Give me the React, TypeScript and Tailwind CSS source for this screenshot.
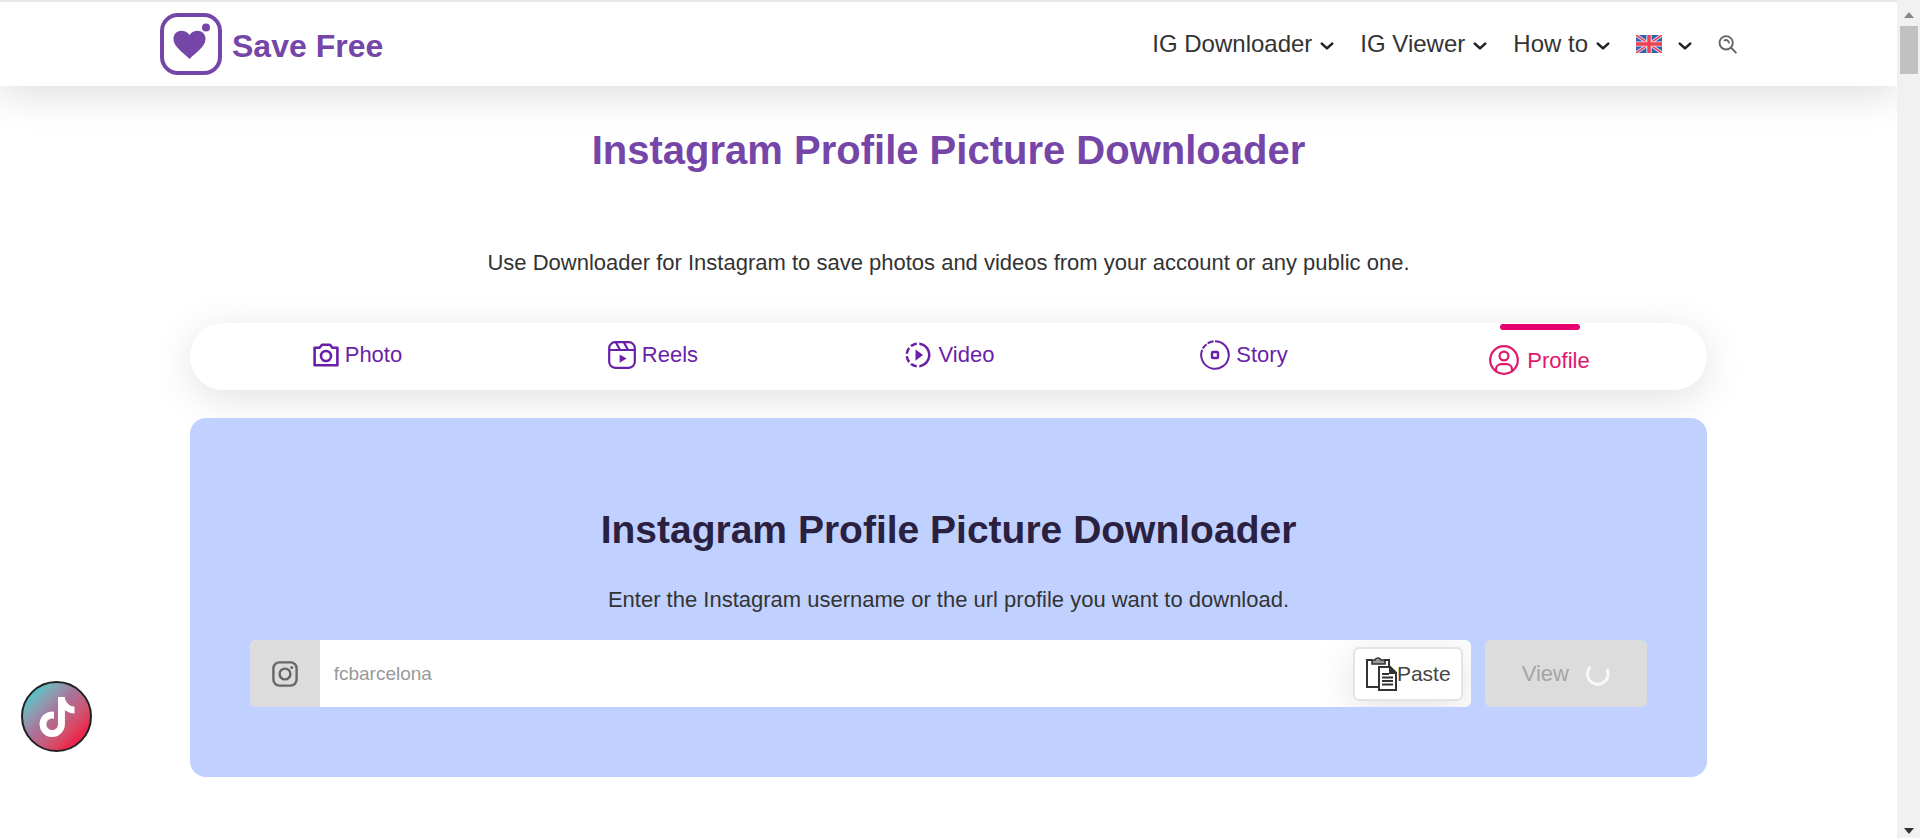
import type { ReactNode } from "react";
import { FaTiktok } from "react-icons/fa";
import { MdOutlineSlowMotionVideo } from "react-icons/md";

const Caret = () => (
  <svg viewBox="0 0 14 8" className="w-3.5 h-2 mt-1" fill="none" stroke="#222" strokeWidth="2.6" strokeLinecap="round" strokeLinejoin="round">
    <path d="M1.8 1.6 7 6.4l5.2-4.8" />
  </svg>
);

const LogoIcon = () => (
  <svg viewBox="0 0 62 62" className="w-[62px] h-[62px]">
    <rect x="2" y="2" width="58" height="58" rx="16" fill="none" stroke="#7546a8" strokeWidth="4" />
    <path d="M29.500 46C24 40 13.500 34 13.500 26c0-9 11-11 16-4 5-7 16-5 16 4 0 8-10.500 14-16 20Z" fill="#7546a8" />
    <circle cx="46" cy="14.500" r="4" fill="#7546a8" />
  </svg>
);

const FlagIcon = () => (
  <svg viewBox="0 0 26 18" className="h-[18px] w-[26px]">
    <rect width="26" height="18" rx="2" fill="#2f62b5" />
    <path d="M0 0 26 18M26 0 0 18" stroke="#e6e3ee" strokeWidth="3.2" />
    <path d="M0 0 26 18M26 0 0 18" stroke="#ee4456" strokeWidth="1.6" />
    <path d="M13 0v18M0 9h26" stroke="#f1e4ea" strokeWidth="5.2" />
    <path d="M13 0v18M0 9h26" stroke="#ef4052" strokeWidth="3.4" />
  </svg>
);

const SearchIcon = () => (
  <svg viewBox="0 0 20 20" className="w-[19px] h-[19px]" fill="none" stroke="#666" strokeWidth="2" strokeLinecap="round">
    <circle cx="8.6" cy="8.2" r="7" />
    <path d="m13.8 13.4 5 5.2M6.8 5.6c2.4-.8 4.2.2 4.6 2.4" />
  </svg>
);

const CameraIcon = () => (
  <svg viewBox="0 0 26 24" className="w-[26px] h-6" fill="none" stroke="currentColor" strokeWidth="2.6" strokeLinejoin="round">
    <path d="M1.6 4.8h5L9 1.8h8l2.400 3h5v17.400H1.600Z" />
    <circle cx="13" cy="13" r="5" />
  </svg>
);

const ReelsIcon = () => (
  <svg viewBox="0 0 28 28" className="w-7 h-7" fill="none" stroke="currentColor" strokeWidth="2.2">
    <rect x="1.2" y="1.2" width="25.6" height="25.6" rx="6" />
    <path d="M1.2 9h25.6M8 1.4 12 9M16 1.4 20 9" />
    <path d="M11.6 13.4v8.4l7-4.2Z" fill="currentColor" stroke="none" />
  </svg>
);

const StoryIcon = () => (
  <svg viewBox="0 0 30 30" className="w-[30px] h-[30px]" fill="none" stroke="currentColor" strokeWidth="2">
    <path d="M15 1.2a13.8 13.8 0 1 1-12.8 8.6" />
    <path d="M2.800 8.600a13.800 13.800 0 0 1 3.800-4.400M7.600 3.400a13.800 13.800 0 0 1 6-2.100" />
    <rect x="12" y="12" width="6" height="6" rx="1" strokeWidth="2.4" />
  </svg>
);

const ProfileIcon = () => (
  <svg viewBox="0 0 30 30" className="w-[30px] h-[30px]" fill="none" stroke="currentColor" strokeWidth="2.2">
    <circle cx="15" cy="15" r="13.8" />
    <circle cx="15" cy="11" r="4.4" />
    <path d="M7 26v-1.6c0-3 2.2-5.2 5.2-5.2h5.6c3 0 5.2 2.2 5.2 5.2V26" />
  </svg>
);

const InstagramIcon = () => (
  <svg viewBox="0 0 26 26" className="w-[26px] h-[26px]" fill="none" stroke="#666" strokeWidth="2.4">
    <rect x="1.4" y="1.4" width="23.2" height="23.2" rx="6" />
    <circle cx="13" cy="13" r="5.4" />
    <circle cx="19.8" cy="6.4" r="1.5" fill="#666" stroke="none" />
  </svg>
);

const PasteIcon = () => (
  <svg viewBox="0 0 31 34" className="w-[31px] h-[34px]" fill="none" stroke="#333" strokeWidth="2">
    <path d="M12.5 30H1V3h5M18 3h5v6" />
    <path d="M6 7V3h3c.4-1.4 1.4-2 3-2s2.600.6 3 2h4v4Z" fill="#999" strokeWidth="1.6" />
    <path d="M13 10h11l6 6v17H13Z" fill="#fff" />
    <path d="M24 10v6h6Z" fill="#333" />
    <path d="M16 17h7M16 20.500h11M16 24h11M16 27.500h11" strokeWidth="1.8" />
  </svg>
);

const navLinks = ["IG Downloader", "IG Viewer", "How to"];

const tabs: { label: string; icon: ReactNode }[] = [
  { label: "Photo", icon: <CameraIcon /> },
  { label: "Reels", icon: <ReelsIcon /> },
  { label: "Video", icon: <MdOutlineSlowMotionVideo className="w-[30px] h-[30px]" /> },
  { label: "Story", icon: <StoryIcon /> },
];

const Header = () => (
  <header className="flex items-center justify-between px-40 h-[86px] bg-white border-t-2 border-[#e8e8e8] shadow-[0_8px_40px_rgba(0,0,0,0.14)]">
    <a href="#home" className="flex items-center gap-2.5">
      <LogoIcon />
      <span className="pt-1 text-[32px] font-bold text-[#7546a8]">Save Free</span>
    </a>
    <nav className="flex items-center gap-[26px] text-2xl text-[#333]">
      {navLinks.map((label) => (
        <a key={label} href="#menu" className="flex items-center gap-2">
          {label}
          <Caret />
        </a>
      ))}
      <button aria-label="English" className="flex items-center gap-4">
        <FlagIcon />
        <Caret />
      </button>
      <button aria-label="Search">
        <SearchIcon />
      </button>
    </nav>
  </header>
);

const Tabs = () => (
  <nav className="grid grid-cols-5 px-5 mt-10 bg-white rounded-full h-[67px] text-[22px] text-[#6a1fa8] shadow-[0_8px_40px_rgba(0,0,0,0.12)]">
    {tabs.map(({ label, icon }) => (
      <a key={label} href="#tab" className="flex items-center justify-center gap-1.5 pb-1">
        {icon}
        {label}
      </a>
    ))}
    <a href="#profile" className="flex flex-col items-center text-[#e0186c]">
      <span className="w-20 h-1.5 mt-px rounded-full bg-[#e5006d]" />
      <span className="flex items-center flex-1 gap-2">
        <ProfileIcon />
        Profile
      </span>
    </a>
  </nav>
);

const DownloadForm = () => (
  <section className="px-[60px] pt-[88px] pb-[70px] mt-7 rounded-2xl bg-[#c1d1ff]">
    <h2 className="text-[39px] leading-12 font-bold text-center text-[#2a2140]">Instagram Profile Picture Downloader</h2>
    <p className="mt-[30px] text-[22px] leading-8 text-center text-[#333]">
      Enter the Instagram username or the url profile you want to download.
    </p>
    <form className="flex mt-6 gap-3.5 h-[67px]">
      <div className="flex items-center flex-1 overflow-hidden bg-white rounded-md">
        <label htmlFor="username" aria-label="Username" className="flex items-center justify-center h-full w-[70px] bg-[#dcdcdc]">
          <InstagramIcon />
        </label>
        <input
          id="username"
          type="text"
          defaultValue="fcbarcelona"
          className="flex-1 h-full min-w-0 px-3.5 text-[19px] text-[#999] outline-none"
        />
        <button type="button" className="flex items-center justify-center mr-2 text-[21px] text-[#444] bg-white border-2 border-[#e4e4e4] rounded-md w-[110px] h-[54px] shadow-[0_8px_40px_rgba(0,0,0,0.12)]">
          <PasteIcon />
          Paste
        </button>
      </div>
      <button type="button" className="flex items-center justify-center gap-4 text-[22px] text-[#a5a5a5] bg-[#dcdcdc] rounded-md w-[162px]">
        View
        <svg viewBox="0 0 26 26" className="w-[26px] h-[26px]" fill="none" stroke="#f8f8f8" strokeWidth="3">
          <path d="M5.500 5.500A10.400 10.400 0 1 0 22 8" />
        </svg>
      </button>
    </form>
  </section>
);

const Scrollbar = () => (
  <div className="flex flex-col items-center justify-between py-1 bg-[#f1f1f1] w-[23px]">
    <div className="flex flex-col items-center gap-2 pt-2">
      <svg viewBox="0 0 10 6" className="w-2.5 h-1.5" fill="#888">
        <path d="M5 0 10 6H0Z" />
      </svg>
      <span className="h-12 bg-[#c1c1c1] w-[18px]" />
    </div>
    <svg viewBox="0 0 10 6" className="w-2.5 h-1.5" fill="#333">
      <path d="M0 0h10L5 6Z" />
    </svg>
  </div>
);

export default function App() {
  return (
    <div className="flex h-screen overflow-hidden bg-white font-['Liberation_Sans',Arial,sans-serif]">
      <div className="flex-1">
        <Header />
        <main className="w-4/5 mx-auto">
          <h1 className="pt-10 text-[40px] leading-12 font-bold text-center text-[#7546a8]">Instagram Profile Picture Downloader</h1>
          <p className="mt-[73px] text-[22px] leading-8 text-center text-[#333]">
            Use Downloader for Instagram to save photos and videos from your account or any public one.
          </p>
          <div className="pt-1">
            <Tabs />
          </div>
          <DownloadForm />
        </main>
      </div>
      <Scrollbar />
      <a
        href="#tiktok"
        aria-label="TikTok"
        className="fixed flex items-center justify-center border-2 border-[#222] rounded-full left-[21px] bottom-[86px] w-[71px] h-[71px] bg-linear-135 from-[#4fc3c6] from-15% via-[#a8719a] via-45% to-[#e8284f] to-80%"
      >
        <FaTiktok className="w-9 h-10 text-white" />
      </a>
    </div>
  );
}
